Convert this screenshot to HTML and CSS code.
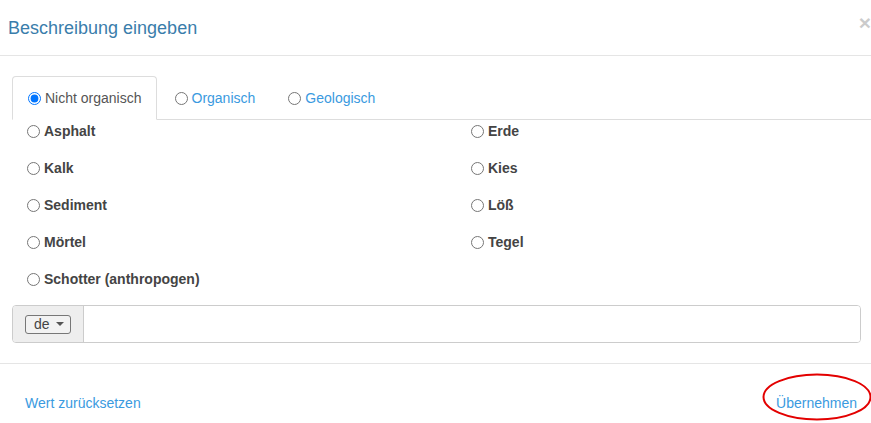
FILE: index.html
```html
<!DOCTYPE html>
<html lang="de">
<head>
<meta charset="utf-8">
<title>Beschreibung eingeben</title>
<link rel="stylesheet" href="styles.css">
</head>
<body>
<div class="modal">
  <div class="modal-header">
    <h4 class="modal-title">Beschreibung eingeben</h4>
    <span class="close">×</span>
  </div>
  <div class="modal-body">
    <ul class="nav-tabs">
      <li class="tab active"><label><input type="radio" name="cat" checked>Nicht organisch</label></li>
      <li class="tab"><label><input type="radio" name="cat">Organisch</label></li>
      <li class="tab"><label><input type="radio" name="cat">Geologisch</label></li>
    </ul>
    <div class="options">
      <label class="opt"><input type="radio" name="mat">Asphalt</label>
      <label class="opt"><input type="radio" name="mat">Erde</label>
      <label class="opt"><input type="radio" name="mat">Kalk</label>
      <label class="opt"><input type="radio" name="mat">Kies</label>
      <label class="opt"><input type="radio" name="mat">Sediment</label>
      <label class="opt"><input type="radio" name="mat">Löß</label>
      <label class="opt"><input type="radio" name="mat">Mörtel</label>
      <label class="opt"><input type="radio" name="mat">Tegel</label>
      <label class="opt"><input type="radio" name="mat">Schotter (anthropogen)</label>
    </div>
    <div class="input-group">
      <div class="addon"><span class="lang-btn">de <span class="caret"></span></span></div>
      <input class="text" type="text">
    </div>
  </div>
  <div class="modal-footer">
    <a class="link">Wert zurücksetzen</a>
    <a class="link apply">Übernehmen</a>
  </div>
  <svg class="mark" width="112" height="50" viewBox="0 0 112 50"><ellipse cx="56" cy="25" rx="53.5" ry="22.5" fill="none" stroke="#e30000" stroke-width="2"/></svg>
</div>
</body>
</html>
```
FILE: styles.css
```css
html, body {
  margin: 0;
  padding: 0;
  background: #fff;
}
body {
  width: 871px;
  height: 423px;
  overflow: hidden;
  font-family: "Liberation Sans", Arial, sans-serif;
  font-size: 14px;
  line-height: 20px;
  color: #333;
}
.modal {
  position: relative;
  width: 871px;
}
.modal-header {
  height: 56px;
  border-bottom: 1px solid #e5e5e5;
  display: flex;
  align-items: center;
  justify-content: space-between;
  padding: 0 0 0 8px;
  box-sizing: border-box;
}
.modal-title {
  margin: 0;
  font-size: 18px;
  font-weight: normal;
  color: #3a7dab;
  line-height: 25px;
  padding-top: 1px;
}
.close {
  font-size: 21px;
  font-weight: bold;
  color: #000;
  opacity: 0.2;
  margin-right: 0;
  margin-top: -10px;
}
.modal-body {
  padding: 20px 10px 20px 12px;
}
.nav-tabs {
  list-style: none;
  margin: 0;
  padding: 0;
  display: flex;
  border-bottom: 1px solid #ddd;
  margin-right: -10px;
}
.tab {
  margin-right: 2px;
  margin-bottom: -1px;
  border: 1px solid transparent;
  border-radius: 4px 4px 0 0;
}
.tab label {
  display: flex;
  align-items: center;
  padding: 11px 14px 11px 13px;
  color: #3a9ae0;
  cursor: pointer;
}
.tab.active {
  border-color: #ddd #ddd transparent #ddd;
  background: #fff;
}
.tab.active label {
  color: #555;
}
input[type="radio"] {
  width: 13px;
  height: 13px;
  margin: 0 4px 0 2px;
}
.options {
  display: grid;
  grid-template-columns: 444px 1fr;
  row-gap: 17px;
  padding: 1px 0 0 13px;
}
.opt {
  display: flex;
  align-items: center;
  font-weight: bold;
  color: #444;
  height: 20px;
}
.opt input {
  margin-right: 4px;
}
.input-group {
  margin-top: 16px;
  display: flex;
  height: 38px;
  border: 1px solid #ccc;
  border-radius: 4px;
  box-sizing: border-box;
  overflow: hidden;
}
.addon {
  width: 71px;
  background: #eee;
  border-right: 1px solid #ccc;
  display: flex;
  align-items: center;
  padding-left: 12px;
  box-sizing: border-box;
}
.lang-btn {
  display: inline-flex;
  align-items: center;
  height: 19px;
  box-sizing: border-box;
  padding: 0 6px 0 8px;
  border: 1px solid #777;
  border-radius: 3px;
  background: #f2f2f2;
  color: #444;
  font-size: 14px;
  line-height: 17px;
}
.caret {
  display: inline-block;
  width: 0;
  height: 0;
  margin-left: 6px;
  border-top: 4px solid #555;
  border-left: 4px solid transparent;
  border-right: 4px solid transparent;
}
.text {
  flex: 1;
  border: 0;
  outline: none;
  margin: 0;
  padding: 0 12px;
}
.modal-footer {
  border-top: 1px solid #e5e5e5;
  display: flex;
  justify-content: space-between;
  padding: 29px 14px 0 25px;
  margin-top: 0;
}
.link {
  color: #3a9ae0;
  cursor: pointer;
}
.mark {
  position: absolute;
  left: 761px;
  top: 372px;
}
```
